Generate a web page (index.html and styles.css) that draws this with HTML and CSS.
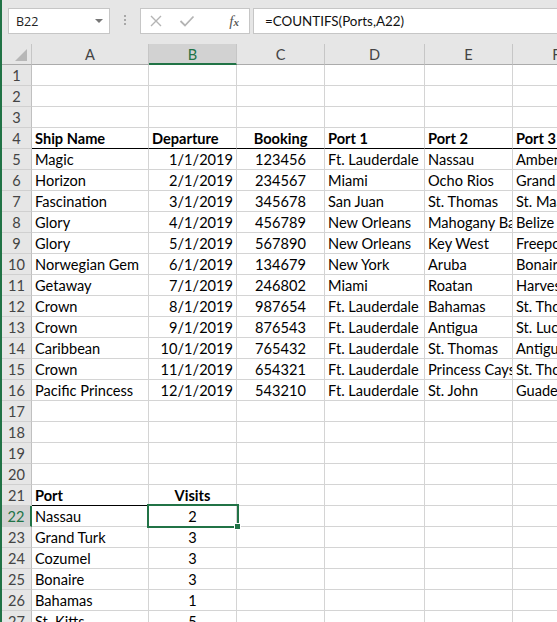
FILE: index.html
```html
<!DOCTYPE html>
<html lang="en">
<head>
    <meta charset="UTF-8">
    <title>Ports - Excel</title>
    <link rel="stylesheet" href="styles.css">
</head>
<body>
    <div class="app">
        <div class="formula-bar">
            <div class="name-box">
                <span>B22</span>
                <span class="drop"></span>
            </div>
            <div class="grip"><i></i><i></i><i></i></div>
            <div class="fx-buttons">
                <svg class="icon" viewBox="0 0 14 14" width="14" height="14"><path d="M2 2 L12 12 M12 2 L2 12" stroke="#b4b4b4" stroke-width="1.4" fill="none"/></svg>
                <svg class="icon" viewBox="0 0 16 14" width="16" height="14"><path d="M1.5 7 L6 11.5 L14.5 2.5" stroke="#b4b4b4" stroke-width="1.8" fill="none"/></svg>
                <span class="fx">f<small>x</small></span>
            </div>
            <div class="formula-input">=COUNTIFS(Ports,A22)</div>
        </div>

        <div class="sheet">
            <div class="row colhdr">
                <div class="corner"><svg viewBox="0 0 14 14" width="14" height="14"><path d="M13 1 L13 13 L1 13 Z" fill="#b7b7b7"/></svg></div>
                <div>A</div><div class="sel">B</div><div>C</div><div>D</div><div>E</div><div>F</div>
            </div>
            <div class="row"><div class="rh">1</div><div></div><div></div><div></div><div></div><div></div><div></div></div>
            <div class="row"><div class="rh">2</div><div></div><div></div><div></div><div></div><div></div><div></div></div>
            <div class="row"><div class="rh">3</div><div></div><div></div><div></div><div></div><div></div><div></div></div>
            <div class="row titles"><div class="rh">4</div><div>Ship Name</div><div>Departure</div><div class="ctr">Booking</div><div>Port 1</div><div>Port 2</div><div>Port 3</div></div>
            <div class="row"><div class="rh">5</div><div>Magic</div><div class="r">1/1/2019</div><div class="ctr">123456</div><div>Ft. Lauderdale</div><div>Nassau</div><div>Amber Cove</div></div>
            <div class="row"><div class="rh">6</div><div>Horizon</div><div class="r">2/1/2019</div><div class="ctr">234567</div><div>Miami</div><div>Ocho Rios</div><div>Grand Turk</div></div>
            <div class="row"><div class="rh">7</div><div>Fascination</div><div class="r">3/1/2019</div><div class="ctr">345678</div><div>San Juan</div><div>St. Thomas</div><div>St. Maarten</div></div>
            <div class="row"><div class="rh">8</div><div>Glory</div><div class="r">4/1/2019</div><div class="ctr">456789</div><div>New Orleans</div><div>Mahogany Bay</div><div>Belize</div></div>
            <div class="row"><div class="rh">9</div><div>Glory</div><div class="r">5/1/2019</div><div class="ctr">567890</div><div>New Orleans</div><div>Key West</div><div>Freeport</div></div>
            <div class="row"><div class="rh">10</div><div>Norwegian Gem</div><div class="r">6/1/2019</div><div class="ctr">134679</div><div>New York</div><div>Aruba</div><div>Bonaire</div></div>
            <div class="row"><div class="rh">11</div><div>Getaway</div><div class="r">7/1/2019</div><div class="ctr">246802</div><div>Miami</div><div>Roatan</div><div>Harvest Caye</div></div>
            <div class="row"><div class="rh">12</div><div>Crown</div><div class="r">8/1/2019</div><div class="ctr">987654</div><div>Ft. Lauderdale</div><div>Bahamas</div><div>St. Thomas</div></div>
            <div class="row"><div class="rh">13</div><div>Crown</div><div class="r">9/1/2019</div><div class="ctr">876543</div><div>Ft. Lauderdale</div><div>Antigua</div><div>St. Lucia</div></div>
            <div class="row"><div class="rh">14</div><div>Caribbean</div><div class="r">10/1/2019</div><div class="ctr">765432</div><div>Ft. Lauderdale</div><div>St. Thomas</div><div>Antigua</div></div>
            <div class="row"><div class="rh">15</div><div>Crown</div><div class="r">11/1/2019</div><div class="ctr">654321</div><div>Ft. Lauderdale</div><div>Princess Cays</div><div>St. Thomas</div></div>
            <div class="row"><div class="rh">16</div><div>Pacific Princess</div><div class="r">12/1/2019</div><div class="ctr">543210</div><div>Ft. Lauderdale</div><div>St. John</div><div>Guadeloupe</div></div>
            <div class="row"><div class="rh">17</div><div></div><div></div><div></div><div></div><div></div><div></div></div>
            <div class="row"><div class="rh">18</div><div></div><div></div><div></div><div></div><div></div><div></div></div>
            <div class="row"><div class="rh">19</div><div></div><div></div><div></div><div></div><div></div><div></div></div>
            <div class="row"><div class="rh">20</div><div></div><div></div><div></div><div></div><div></div><div></div></div>
            <div class="row summary"><div class="rh">21</div><div class="b">Port</div><div class="b ctr">Visits</div><div></div><div></div><div></div><div></div></div>
            <div class="row"><div class="rh active">22</div><div>Nassau</div><div class="ctr">2</div><div></div><div></div><div></div><div></div></div>
            <div class="row"><div class="rh">23</div><div>Grand Turk</div><div class="ctr">3</div><div></div><div></div><div></div><div></div></div>
            <div class="row"><div class="rh">24</div><div>Cozumel</div><div class="ctr">3</div><div></div><div></div><div></div><div></div></div>
            <div class="row"><div class="rh">25</div><div>Bonaire</div><div class="ctr">3</div><div></div><div></div><div></div><div></div></div>
            <div class="row"><div class="rh">26</div><div>Bahamas</div><div class="ctr">1</div><div></div><div></div><div></div><div></div></div>
            <div class="row"><div class="rh">27</div><div>St. Kitts</div><div class="ctr">5</div><div></div><div></div><div></div><div></div></div>

            <div class="selection"><span class="handle"></span></div>
        </div>
    </div>
</body>
</html>
```

FILE: styles.css
```css
* {
    margin: 0;
    padding: 0;
    box-sizing: border-box;
}

body {
    background: #e6e6e6;
    font-family: 'Lato', 'Liberation Sans', sans-serif;
    overflow: hidden;
}

.app {
    height: 622px;
    border-left: 2px solid #217346;
    overflow: hidden;
    background: #fff;
}

/* formula bar */

.formula-bar {
    display: flex;
    align-items: flex-start;
    height: 44px;
    padding: 8px 0 0 6px;
    background: #e6e6e6;
}

.name-box {
    display: flex;
    align-items: center;
    justify-content: space-between;
    width: 102px;
    height: 26px;
    padding: 0 6px 0 7px;
    background: #fff;
    border: 1px solid #c6c6c6;
    font-family: 'Open Sans', sans-serif;
    font-size: 12.5px;
    color: #222;
}

.drop {
    width: 0;
    height: 0;
    border-left: 4px solid transparent;
    border-right: 4px solid transparent;
    border-top: 4px solid #777;
}

.grip {
    display: flex;
    flex-direction: column;
    gap: 2px;
    width: 30px;
    padding-top: 7px;
    align-items: center;
}

.grip i {
    width: 2px;
    height: 2px;
    background: #a8a8a8;
}

.fx-buttons {
    display: flex;
    align-items: center;
    width: 110px;
    height: 26px;
    padding-left: 8px;
    background: #fff;
    border: 1px solid #c6c6c6;
}

.fx-buttons .icon {
    margin-right: 16px;
}

.fx-buttons .icon + .icon {
    margin-right: 0;
}

.fx {
    margin-left: auto;
    margin-right: 10px;
    font-family: 'Liberation Serif', serif;
    font-style: italic;
    font-size: 15px;
    color: #555;
}

.fx small {
    font-size: 11px;
    font-weight: bold;
}

.formula-input {
    flex: 1;
    height: 26px;
    margin-left: 3px;
    padding-left: 11px;
    line-height: 25px;
    background: #fff;
    border: 1px solid #c6c6c6;
    border-right: none;
    font-size: 13.4px;
    color: #111;
    white-space: nowrap;
}

/* grid */

.sheet {
    position: relative;
    font-size: 14.6px;
    color: #000;
}

.row {
    display: flex;
    height: 21px;
}

.row > div {
    flex: none;
    height: 21px;
    padding: 1px 3px 0;
    line-height: 20px;
    border-right: 1px solid #d4d4d4;
    border-bottom: 1px solid #d4d4d4;
    white-space: nowrap;
    overflow: hidden;
}

.row > div:nth-child(1) { width: 30px; }
.row > div:nth-child(2) { width: 117px; }
.row > div:nth-child(3) { width: 88px; }
.row > div:nth-child(4) { width: 88px; }
.row > div:nth-child(5) { width: 100px; }
.row > div:nth-child(6) { width: 88px; }
.row > div:nth-child(7) { width: 88px; }

.row .rh {
    padding: 1px 0 0;
    text-align: center;
    background: #e6e6e6;
    color: #444;
    border-right-color: #c0c0c0;
    border-bottom-color: #d0d0d0;
}

.row .rh.active {
    background: #d2d2d2;
    color: #217346;
    border-right: 2px solid #217346;
}

.colhdr > div {
    text-align: center;
    background: #e6e6e6;
    color: #444;
    border-right-color: #c6c6c6;
    border-bottom-color: #ababab;
}

.colhdr > .sel {
    background: #d2d2d2;
    color: #217346;
    border-bottom: 2px solid #217346;
}

.colhdr .corner {
    display: flex;
    align-items: flex-end;
    justify-content: flex-end;
    padding: 0 3px 2px 0;
}

.titles > div:not(.rh) {
    font-weight: bold;
    border-bottom-color: #000;
}

.summary > div:nth-child(2),
.summary > div:nth-child(3) {
    border-bottom-color: #000;
}

.b { font-weight: bold; }
.r { text-align: right; }
.ctr { text-align: center; }

.selection {
    position: absolute;
    left: 145px;
    top: 460px;
    width: 92px;
    height: 24px;
    border: 2px solid #217346;
}

.handle {
    position: absolute;
    right: -4px;
    bottom: -4px;
    width: 7px;
    height: 7px;
    background: #217346;
    border: 1px solid #fff;
}
```
